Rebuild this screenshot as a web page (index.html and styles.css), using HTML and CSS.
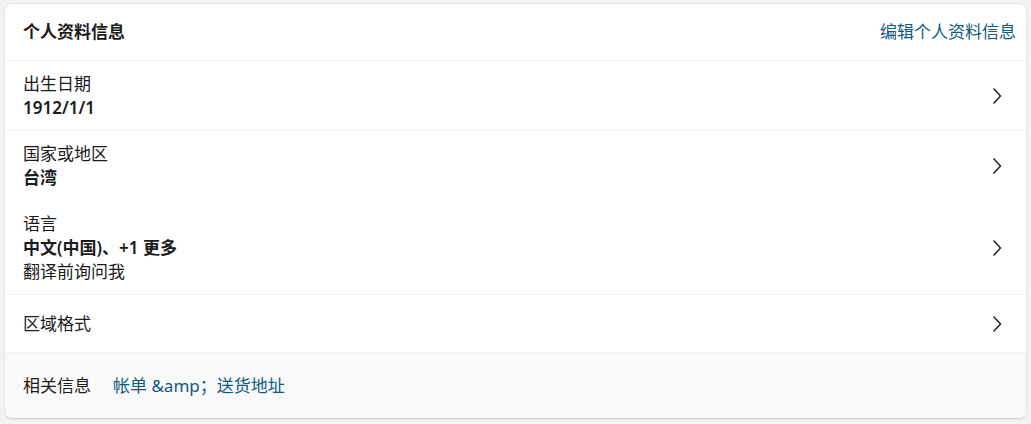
FILE: index.html
```html
<!DOCTYPE html>
<html lang="zh-CN">
<head>
<meta charset="utf-8">
<title>个人资料信息</title>
<link rel="stylesheet" href="styles.css">
</head>
<body>
  <section class="card">
    <header class="card-head">
      <h2 class="card-title">个人资料信息</h2>
      <a class="link" href="#">编辑个人资料信息</a>
    </header>

    <a class="row row-2" href="#">
      <div class="row-text">
        <span class="label">出生日期</span>
        <span class="value">1912/1/1</span>
      </div>
      <svg class="chevron" viewBox="0 0 10 18" aria-hidden="true"><path d="M1.5 1.5 L8.5 9 L1.5 16.5"/></svg>
    </a>

    <a class="row row-2 no-line" href="#">
      <div class="row-text">
        <span class="label">国家或地区</span>
        <span class="value">台湾</span>
      </div>
      <svg class="chevron" viewBox="0 0 10 18" aria-hidden="true"><path d="M1.5 1.5 L8.5 9 L1.5 16.5"/></svg>
    </a>

    <a class="row row-3" href="#">
      <div class="row-text">
        <span class="label">语言</span>
        <span class="value">中文(中国)、+1 更多</span>
        <span class="label">翻译前询问我</span>
      </div>
      <svg class="chevron" viewBox="0 0 10 18" aria-hidden="true"><path d="M1.5 1.5 L8.5 9 L1.5 16.5"/></svg>
    </a>

    <a class="row row-1" href="#">
      <div class="row-text">
        <span class="label">区域格式</span>
      </div>
      <svg class="chevron" viewBox="0 0 10 18" aria-hidden="true"><path d="M1.5 1.5 L8.5 9 L1.5 16.5"/></svg>
    </a>

    <footer class="card-foot">
      <span class="label">相关信息</span>
      <a class="link" href="#">帐单 &amp;amp；送货地址</a>
    </footer>
  </section>
</body>
</html>
```
FILE: styles.css
```css
html, body {
  margin: 0;
  background: #f3f3f3;
}

body {
  padding: 3px 4px;
  font-family: "Noto Sans", "Noto Sans CJK SC", sans-serif;
  font-size: 17px;
  line-height: 24px;
  color: #1b1b1b;
}

.card {
  background: #ffffff;
  border: 1px solid #e6e6e6;
  border-bottom-color: #d2d2d2;
  border-radius: 8px;
  box-shadow: 0 1px 2px rgba(0, 0, 0, 0.06);
  overflow: hidden;
}

.card-head {
  display: flex;
  align-items: center;
  justify-content: space-between;
  height: 56px;
  padding: 0 10px 0 18px;
  border-bottom: 1px solid #f2f2f2;
}

.card-title {
  margin: 0;
  font-size: 17px;
  font-weight: 600;
}

.link {
  color: #0e5a80;
  text-decoration: none;
}

.row {
  display: flex;
  align-items: center;
  justify-content: space-between;
  padding: 0 24px 0 18px;
  color: inherit;
  text-decoration: none;
  border-bottom: 1px solid #f2f2f2;
}

.row.no-line {
  border-bottom-color: transparent;
}

.row-2 { height: 69px; }
.row-3 { height: 93px; }
.row-1 { height: 57px; }

.row-text {
  display: flex;
  flex-direction: column;
}

.value {
  font-weight: 600;
}

.chevron {
  width: 10px;
  height: 18px;
  flex: none;
  fill: none;
  stroke: #1b1b1b;
  stroke-width: 1.4;
}

.card-foot {
  display: flex;
  align-items: center;
  gap: 22px;
  height: 65px;
  padding: 0 18px;
  background: #f9f9f9;
}
```
